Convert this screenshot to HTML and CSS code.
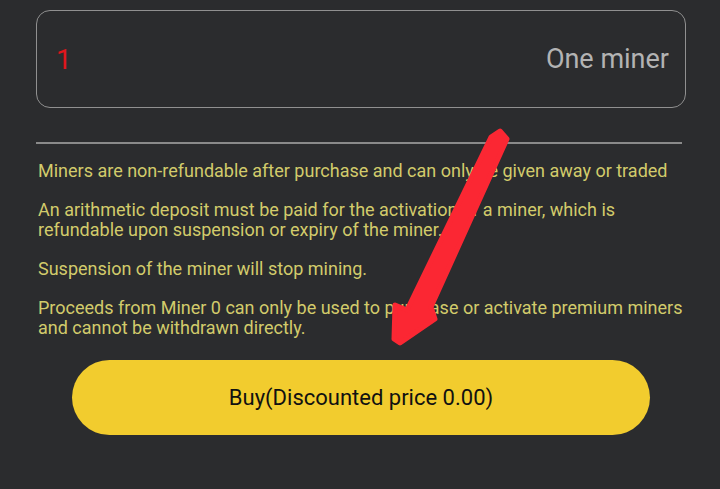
FILE: index.html
```html
<!DOCTYPE html>
<html>
<head>
<meta charset="utf-8">
<link rel="stylesheet" href="styles.css">
</head>
<body>
<div class="page">
  <div class="qty-box">
    <span class="qty-value">1</span>
    <span class="qty-label">One miner</span>
  </div>
  <div class="divider"></div>
  <div class="notes">
    <p>Miners are non-refundable after purchase and can only be given away or traded</p>
    <p>An arithmetic deposit must be paid for the activation of a miner, which is refundable upon suspension or expiry of the miner.</p>
    <p>Suspension of the miner will stop mining.</p>
    <p>Proceeds from Miner 0 can only be used to purchase or activate premium miners and cannot be withdrawn directly.</p>
  </div>
  <div class="btn-row">
    <button class="buy-btn">Buy(Discounted price 0.00)</button>
  </div>
  <svg class="arrow" width="720" height="489" viewBox="0 0 720 489">
    <polygon points="491,137 500,131 507,139 431,307 435,319 400,343 394,339 395,305 407,310" fill="#fb2733" stroke="#fb2733" stroke-width="5" stroke-linejoin="round"/>
  </svg>
</div>
</body>
</html>
```
FILE: styles.css
```css
html, body {
  margin: 0;
  padding: 0;
  background: #2b2c2e;
  font-family: Roboto, "Liberation Sans", sans-serif;
}
.page {
  position: relative;
  width: 720px;
  height: 489px;
  overflow: hidden;
  padding: 10px 34px 0 36px;
  box-sizing: border-box;
}
.qty-box {
  height: 98px;
  box-sizing: border-box;
  border: 1.5px solid #909090;
  border-radius: 14px;
  display: flex;
  align-items: center;
  justify-content: space-between;
  padding: 0 16px 0 19px;
  font-size: 27px;
}
.qty-value {
  color: #e0161c;
  font-size: 28px;
}
.qty-label {
  color: #b3b3b3;
}
.divider {
  margin-top: 34px;
  height: 2px;
  background: #8a8a8a;
  margin-right: 4px;
}
.notes {
  margin-top: 17px;
  color: #d2cb6b;
  font-size: 18px;
  line-height: 20px;
  padding-left: 2px;
}
.notes p {
  margin: 0 0 19px 0;
}
.notes p:last-child {
  margin-bottom: 0;
}
.btn-row {
  margin-top: 22px;
  padding-left: 36px;
}
.buy-btn {
  width: 578px;
  height: 75px;
  border: none;
  border-radius: 38px;
  background: #f2cc2e;
  color: #111;
  font-family: Roboto, "Liberation Sans", sans-serif;
  font-size: 22px;
  padding: 0;
}
.arrow {
  position: absolute;
  left: 0;
  top: 0;
  pointer-events: none;
}
```
